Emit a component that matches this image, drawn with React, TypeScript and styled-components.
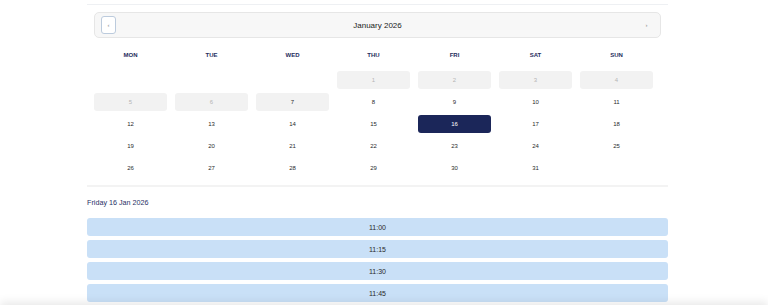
import React from 'react'
import styled, { createGlobalStyle } from 'styled-components'

const GlobalStyle = createGlobalStyle`
  body {
    margin: 0;
    background: #ffffff;
    font-family: 'Liberation Sans', Arial, sans-serif;
    color: #222;
  }
`

const Page = styled.div`
  width: 581px;
  margin: 4px 0 0 87px;
  border-top: 1px solid #eef0f3;
  padding-top: 7px;
`

const Calendar = styled.div`
  padding: 0 7px;
`

const MonthBar = styled.div`
  display: flex;
  align-items: center;
  justify-content: space-between;
  height: 26px;
  box-sizing: border-box;
  padding: 0 6px;
  background: #f7f7f7;
  border: 1px solid #e6e6e6;
  border-radius: 5px;
`

const NavButton = styled.button<{ $outlined?: boolean }>`
  width: 15px;
  height: 18px;
  padding: 0;
  display: flex;
  align-items: center;
  justify-content: center;
  font-family: 'Liberation Sans', Arial, sans-serif;
  font-size: 6px;
  color: #888;
  background: ${p => (p.$outlined ? '#ffffff' : 'transparent')};
  border: 1px solid ${p => (p.$outlined ? '#bccbdd' : 'transparent')};
  border-radius: 3px;
`

const MonthTitle = styled.div`
  font-size: 8px;
  color: #222;
`

const Grid = styled.div`
  display: grid;
  grid-template-columns: repeat(7, 73px);
  column-gap: 8px;
  row-gap: 4px;
`

const WeekdayRow = styled(Grid)`
  margin-top: 10px;
  margin-bottom: 9px;
`

const Weekday = styled.div`
  text-align: center;
  font-size: 6px;
  font-weight: bold;
  line-height: 14px;
  color: #252c5c;
`

type DayState = 'blank' | 'disabled' | 'today' | 'open' | 'selected'

const Day = styled.div<{ $state: DayState }>`
  height: 18px;
  display: flex;
  align-items: center;
  justify-content: center;
  font-size: 6px;
  border-radius: 3px;
  background: ${p =>
    p.$state === 'selected'
      ? '#1b2659'
      : p.$state === 'disabled' || p.$state === 'today'
      ? '#f2f2f2'
      : 'transparent'};
  color: ${p =>
    p.$state === 'selected' ? '#ffffff' : p.$state === 'disabled' ? '#b5b5b5' : '#2a2a2a'};
`

const Divider = styled.div`
  height: 2px;
  background: #f3f3f3;
  margin-top: 8px;
`

const DateHeading = styled.div`
  font-size: 7.2px;
  color: #283066;
  line-height: 14px;
  margin: 9px 0 8px;
`

const Slots = styled.div`
  display: flex;
  flex-direction: column;
  gap: 4px;
`

const Slot = styled.div`
  height: 18px;
  display: flex;
  align-items: center;
  justify-content: center;
  font-size: 7px;
  color: #2a2a2a;
  background: #c9e0f7;
  border-radius: 3px;
`

const BottomShade = styled.div`
  position: fixed;
  left: 0;
  right: 0;
  bottom: -30px;
  height: 30px;
  box-shadow: 0 -3px 10px rgba(0, 0, 0, 0.09);
  background: #ffffff;
`

const weekdays = ['MON', 'TUE', 'WED', 'THU', 'FRI', 'SAT', 'SUN']

const days: { label: string; state: DayState }[] = [
  { label: '', state: 'blank' },
  { label: '', state: 'blank' },
  { label: '', state: 'blank' },
  ...Array.from({ length: 31 }, (_, i) => {
    const d = i + 1
    const state: DayState = d < 7 ? 'disabled' : d === 7 ? 'today' : d === 16 ? 'selected' : 'open'
    return { label: String(d), state }
  }),
]

const slots = ['11:00', '11:15', '11:30', '11:45']

function App() {
  return (
    <>
      <GlobalStyle />
      <Page>
        <Calendar>
          <MonthBar>
            <NavButton $outlined>‹</NavButton>
            <MonthTitle>January 2026</MonthTitle>
            <NavButton>›</NavButton>
          </MonthBar>
          <WeekdayRow>
            {weekdays.map(w => (
              <Weekday key={w}>{w}</Weekday>
            ))}
          </WeekdayRow>
          <Grid>
            {days.map((d, i) => (
              <Day key={i} $state={d.state}>
                {d.label}
              </Day>
            ))}
          </Grid>
        </Calendar>
        <Divider />
        <DateHeading>Friday 16 Jan 2026</DateHeading>
        <Slots>
          {slots.map(s => (
            <Slot key={s}>{s}</Slot>
          ))}
        </Slots>
      </Page>
      <BottomShade />
    </>
  )
}

export default App
